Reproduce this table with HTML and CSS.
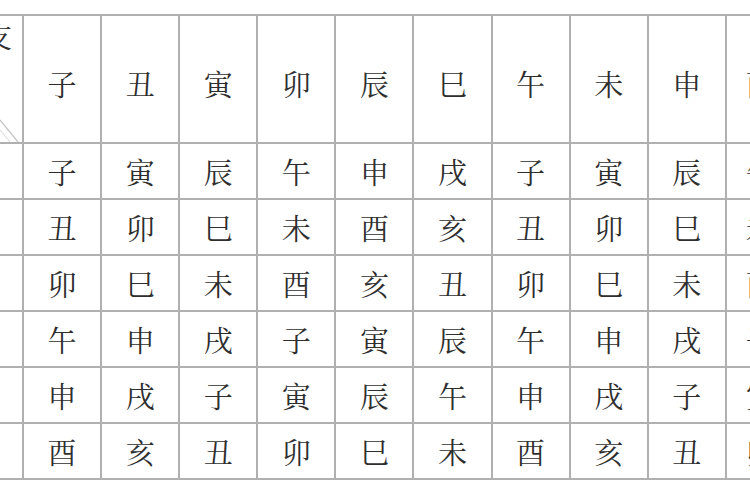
FILE: index.html
```html
<!DOCTYPE html>
<html lang="zh">
<head>
<meta charset="utf-8">
<link rel="stylesheet" href="styles.css">
</head>
<body>
<div class="page">
  <div class="table">
    <div class="cell corner">
      <span class="corner-label">月支</span>
      <svg class="corner-lines" width="22" height="126" viewBox="0 0 22 126">
        <line x1="0" y1="104" x2="18" y2="126" stroke="#c4c4c4" stroke-width="1.2"/>
        <line x1="0" y1="114" x2="10" y2="126" stroke="#d6d6d6" stroke-width="1"/>
      </svg>
    </div>
    <div class="cell head">子</div><div class="cell head">丑</div><div class="cell head">寅</div><div class="cell head">卯</div><div class="cell head">辰</div><div class="cell head">巳</div><div class="cell head">午</div><div class="cell head">未</div><div class="cell head">申</div><div class="cell head last">酉</div>

    <div class="cell side"></div>
    <div class="cell">子</div><div class="cell">寅</div><div class="cell">辰</div><div class="cell">午</div><div class="cell">申</div><div class="cell">戌</div><div class="cell">子</div><div class="cell">寅</div><div class="cell">辰</div><div class="cell last">午</div>

    <div class="cell side"></div>
    <div class="cell">丑</div><div class="cell">卯</div><div class="cell">巳</div><div class="cell">未</div><div class="cell">酉</div><div class="cell">亥</div><div class="cell">丑</div><div class="cell">卯</div><div class="cell">巳</div><div class="cell last">未</div>

    <div class="cell side"></div>
    <div class="cell">卯</div><div class="cell">巳</div><div class="cell">未</div><div class="cell">酉</div><div class="cell">亥</div><div class="cell">丑</div><div class="cell">卯</div><div class="cell">巳</div><div class="cell">未</div><div class="cell last">酉</div>

    <div class="cell side"></div>
    <div class="cell">午</div><div class="cell">申</div><div class="cell">戌</div><div class="cell">子</div><div class="cell">寅</div><div class="cell">辰</div><div class="cell">午</div><div class="cell">申</div><div class="cell">戌</div><div class="cell last">子</div>

    <div class="cell side"></div>
    <div class="cell">申</div><div class="cell">戌</div><div class="cell">子</div><div class="cell">寅</div><div class="cell">辰</div><div class="cell">午</div><div class="cell">申</div><div class="cell">戌</div><div class="cell">子</div><div class="cell last">寅</div>

    <div class="cell side"></div>
    <div class="cell">酉</div><div class="cell">亥</div><div class="cell">丑</div><div class="cell">卯</div><div class="cell">巳</div><div class="cell">未</div><div class="cell">酉</div><div class="cell">亥</div><div class="cell">丑</div><div class="cell last">卯</div>
  </div>
</div>
</body>
</html>
```

FILE: styles.css
```css
html, body {
  margin: 0;
  padding: 0;
  background: #ffffff;
}

.page {
  width: 750px;
  height: 500px;
  overflow: hidden;
  padding-top: 14px;
  box-sizing: border-box;
}

.table {
  display: grid;
  grid-template-columns: 22px repeat(9, 76.1px) 76px;
  grid-template-rows: 126px repeat(6, 54px);
  gap: 2px;
  padding: 2px 0;
  width: max-content;
  background: #b0b0b0;
  font-family: "Noto Serif CJK SC", "Noto Sans CJK SC", serif;
  font-size: 29px;
  font-weight: 400;
  color: #2e2e2e;
}

.cell {
  background: #ffffff;
  display: flex;
  align-items: center;
  justify-content: center;
  line-height: 1;
  overflow: hidden;
}

.cell.last {
  justify-content: flex-start;
  padding-left: 19px;
  box-sizing: border-box;
}

.head {
  padding-top: 8px;
  box-sizing: border-box;
}

.corner {
  position: relative;
  align-items: flex-start;
  justify-content: flex-end;
  padding-top: 6px;
  padding-right: 10px;
  box-sizing: border-box;
  font-size: 28px;
}

.corner-label {
  white-space: nowrap;
}

.corner-lines {
  position: absolute;
  left: 0;
  top: 0;
}
```
